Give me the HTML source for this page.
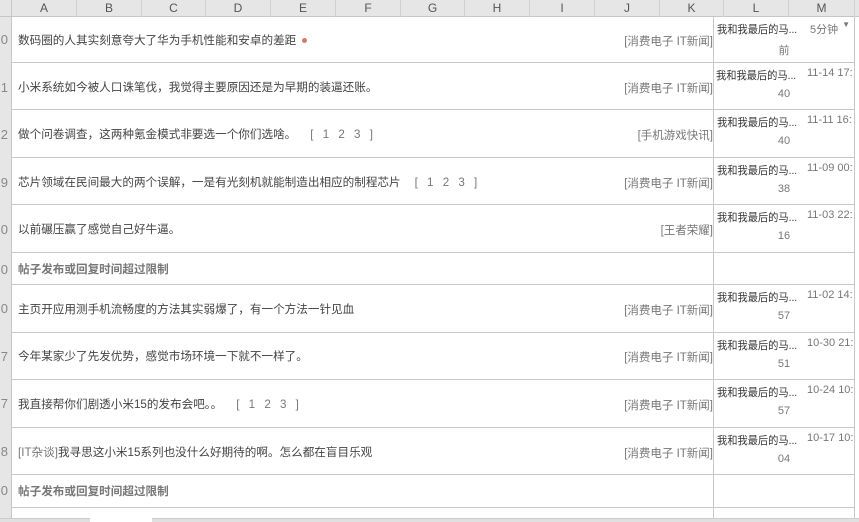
<!DOCTYPE html>
<html><head><meta charset="utf-8"><style>
*{margin:0;padding:0;box-sizing:border-box}
body{width:859px;height:522px;overflow:hidden;background:#fff;font-family:"Liberation Sans","Noto Sans CJK SC",sans-serif;color:#444;position:relative}
.hdr{position:absolute;top:0;left:0;width:859px;height:17px;background:#e6e6e6;border-bottom:1px solid #c6c6c6}
.hc{position:absolute;top:0;height:17px;line-height:17px;text-align:center;font-size:12px;color:#555;border-right:1px solid #d0d0d0}
.rh{position:absolute;left:0;top:17px;width:12px;height:505px;background:#e6e6e6;border-right:1px solid #c6c6c6;overflow:hidden}
.rn{position:absolute;left:-6px;font-size:13px;color:#888;width:14px;text-align:right}
.row{position:absolute;left:12px;width:843px;border-bottom:1px solid #c8c8c8}
.t{position:absolute;left:6px;font-size:11.6px;color:#444;white-space:nowrap}
.pg{color:#777;letter-spacing:3px;margin-left:14px}
.cat{position:absolute;right:142px;font-size:11.5px;color:#777;white-space:nowrap}
.lm{position:absolute;left:701px;top:0;bottom:0;width:142px;border-left:1px solid #c8c8c8;border-right:1px solid #c8c8c8}
.au{position:absolute;left:3px;top:4px;font-size:11px;color:#333;white-space:nowrap;transform:scaleX(0.93);transform-origin:left}
.tm{position:absolute;left:93px;top:4px;font-size:11px;color:#777;white-space:nowrap}
.tm2{position:absolute;left:0;width:100%;top:25px;text-align:center;font-size:11px;color:#777}
.lim{font-weight:bold;color:#777}
.dot{display:inline-block;width:5px;height:5px;border-radius:50%;background:#d47a6a;margin-left:6px;vertical-align:middle}
</style></head><body>
<div class="hdr">
<div class="hc" style="left:0;width:12px;border-right:1px solid #c6c6c6"></div>
<div class="hc" style="left:12px;width:65px">A</div>
<div class="hc" style="left:77px;width:65px">B</div>
<div class="hc" style="left:142px;width:64px">C</div>
<div class="hc" style="left:206px;width:65px">D</div>
<div class="hc" style="left:271px;width:65px">E</div>
<div class="hc" style="left:336px;width:65px">F</div>
<div class="hc" style="left:401px;width:64px">G</div>
<div class="hc" style="left:465px;width:65px">H</div>
<div class="hc" style="left:530px;width:65px">I</div>
<div class="hc" style="left:595px;width:65px">J</div>
<div class="hc" style="left:660px;width:64px">K</div>
<div class="hc" style="left:724px;width:65px">L</div>
<div class="hc" style="left:789px;width:66px">M</div>
</div>
<div class="rh">
<div class="rn" style="top:15px">0</div><div class="rn" style="top:63px">1</div><div class="rn" style="top:110px">2</div><div class="rn" style="top:158px">9</div><div class="rn" style="top:205px">0</div><div class="rn" style="top:245px">0</div><div class="rn" style="top:284px">0</div><div class="rn" style="top:332px">7</div><div class="rn" style="top:379px">7</div><div class="rn" style="top:427px">8</div><div class="rn" style="top:466px">0</div>
</div>

<div class="row" style="top:17px;height:46px"><div class="t" style="top:15px">数码圈的人其实刻意夸大了华为手机性能和安卓的差距<span class="dot"></span></div><div class="cat" style="top:16px">[消费电子 IT新闻]</div><div class="lm"><div class="au">我和我最后的马...</div><div class="tm" style="left:96px">5分钟</div><div class="tm2">前</div><div style="position:absolute;right:4px;top:3px;font-size:8px;color:#777">▼</div></div></div>

<div class="row" style="top:63px;height:47px"><div class="t" style="top:16px">小米系统如今被人口诛笔伐，我觉得主要原因还是为早期的装逼还账。</div><div class="cat" style="top:17px">[消费电子 IT新闻]</div><div class="lm"><div class="au" style="left:2px">我和我最后的马...</div><div class="tm">11-14 17:</div><div class="tm2">40</div></div></div>

<div class="row" style="top:110px;height:48px"><div class="t" style="top:16px">做个问卷调查，这两种氪金模式非要选一个你们选啥。<span class="pg">[ 1 2 3 ]</span></div><div class="cat" style="top:17px">[手机游戏快讯]</div><div class="lm"><div class="au">我和我最后的马...</div><div class="tm">11-11 16:</div><div class="tm2">40</div></div></div>

<div class="row" style="top:158px;height:47px"><div class="t" style="top:16px">芯片领域在民间最大的两个误解，一是有光刻机就能制造出相应的制程芯片<span class="pg">[ 1 2 3 ]</span></div><div class="cat" style="top:17px">[消费电子 IT新闻]</div><div class="lm"><div class="au">我和我最后的马...</div><div class="tm">11-09 00:</div><div class="tm2">38</div></div></div>

<div class="row" style="top:205px;height:48px"><div class="t" style="top:16px">以前碾压赢了感觉自己好牛逼。</div><div class="cat" style="top:17px">[王者荣耀]</div><div class="lm"><div class="au">我和我最后的马...</div><div class="tm">11-03 22:</div><div class="tm2">16</div></div></div>

<div class="row" style="top:253px;height:32px"><div class="t lim" style="top:8px">帖子发布或回复时间超过限制</div><div class="lm"></div></div>

<div class="row" style="top:285px;height:48px"><div class="t" style="top:16px">主页开应用测手机流畅度的方法其实弱爆了，有一个方法一针见血</div><div class="cat" style="top:17px">[消费电子 IT新闻]</div><div class="lm"><div class="au">我和我最后的马...</div><div class="tm">11-02 14:</div><div class="tm2">57</div></div></div>

<div class="row" style="top:333px;height:47px"><div class="t" style="top:15px">今年某家少了先发优势，感觉市场环境一下就不一样了。</div><div class="cat" style="top:16px">[消费电子 IT新闻]</div><div class="lm"><div class="au">我和我最后的马...</div><div class="tm">10-30 21:</div><div class="tm2">51</div></div></div>

<div class="row" style="top:380px;height:48px"><div class="t" style="top:16px">我直接帮你们剧透小米15的发布会吧。。<span class="pg">[ 1 2 3 ]</span></div><div class="cat" style="top:17px">[消费电子 IT新闻]</div><div class="lm"><div class="au">我和我最后的马...</div><div class="tm">10-24 10:</div><div class="tm2">57</div></div></div>

<div class="row" style="top:428px;height:47px"><div class="t" style="top:16px"><span style="color:#777">[IT杂谈]</span>我寻思这小米15系列也没什么好期待的啊。怎么都在盲目乐观</div><div class="cat" style="top:17px">[消费电子 IT新闻]</div><div class="lm"><div class="au">我和我最后的马...</div><div class="tm">10-17 10:</div><div class="tm2">04</div></div></div>

<div class="row" style="top:475px;height:33px"><div class="t lim" style="top:8px">帖子发布或回复时间超过限制</div><div class="lm"></div></div>

<div class="row" style="top:508px;height:12px;border-bottom:none"><div class="lm"></div></div>
<div style="position:absolute;left:0;top:518px;width:859px;height:4px;background:#e0e0e0;border-top:1px solid #ccc"></div>
<div style="position:absolute;left:90px;top:518px;width:62px;height:4px;background:#fff"></div>
</body></html>
